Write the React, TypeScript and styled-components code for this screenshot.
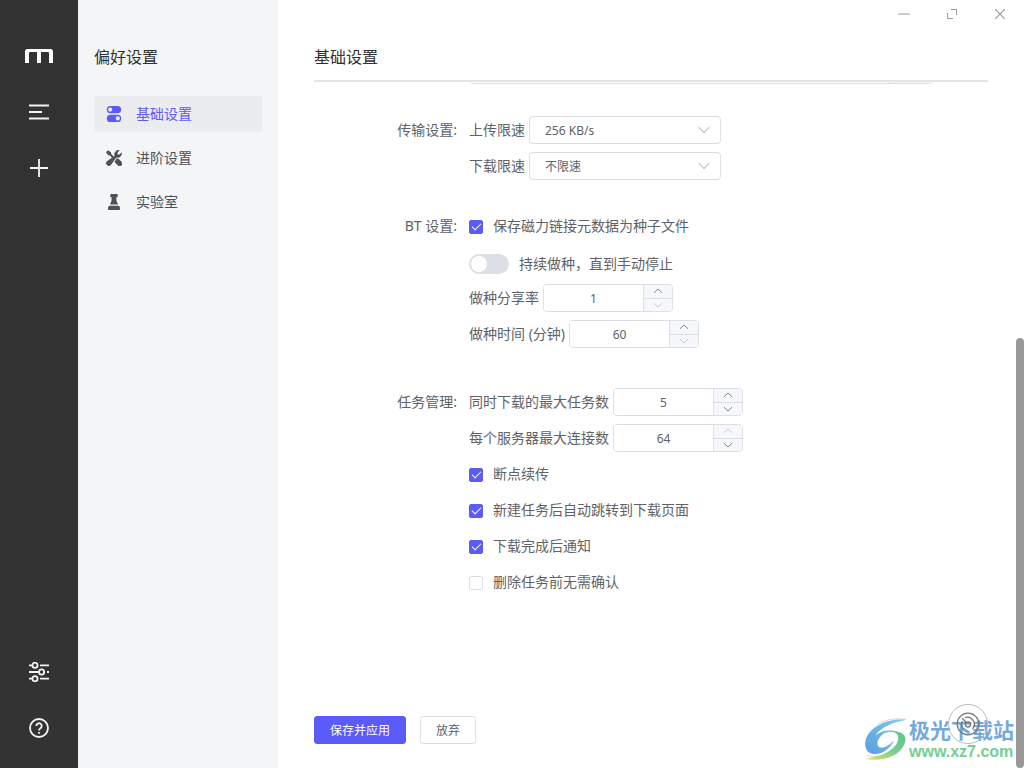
import React from 'react';
import styled, { createGlobalStyle, css } from 'styled-components';

const GlobalStyle = createGlobalStyle`
  *, *::before, *::after { box-sizing: border-box; }
  body {
    margin: 0;
    overflow: hidden;
    color: #606266;
    font: 14px/20px "Noto Sans", "Noto Sans CJK SC", sans-serif;
  }
  button, input, select { font-family: inherit; color: inherit; margin: 0; }
`;

const Shell = styled.div`
  display: flex;
  height: 100vh;
  background: #fff;
`;

const Rail = styled.aside`
  display: flex;
  flex-direction: column;
  justify-content: space-between;
  align-items: center;
  flex: 0 0 78px;
  padding: 40px 0 24px;
  background: #333;
`;

const RailGroup = styled.nav`
  display: flex;
  flex-direction: column;
  gap: 24px;
`;

const RailButton = styled.button`
  display: grid;
  place-items: center;
  width: 32px;
  height: 32px;
  padding: 0;
  border: 0;
  background: none;
  color: #f4f4f4;
`;

const SubNav = styled.nav`
  flex: 0 0 200px;
  padding: 45px 16px 0;
  background: #f4f5f7;
`;

const SubTitle = styled.h2`
  margin: 0 0 27px;
  color: #303133;
  font-size: 16px;
  line-height: 24px;
  font-weight: 400;
`;

const SubList = styled.ul`
  display: flex;
  flex-direction: column;
  gap: 8px;
  margin: 0;
  padding: 0;
  list-style: none;
`;

const SubLink = styled.a<{ $active?: boolean }>`
  display: flex;
  align-items: center;
  gap: 14px;
  height: 36px;
  padding: 0 12px;
  border-radius: 3px;
  color: ${p => (p.$active ? '#5b5bfa' : '#4d515a')};
  background: ${p => (p.$active ? '#eaecf0' : 'transparent')};
  text-decoration: none;
`;

const Main = styled.main`
  position: relative;
  display: flex;
  flex-direction: column;
  flex: 1;
  min-width: 0;
`;

const TitleBar = styled.div`
  display: flex;
  justify-content: flex-end;
  gap: 32px;
  flex: none;
  height: 28px;
  padding: 0 16px;
`;

const WindowButton = styled.button`
  display: grid;
  place-items: center;
  width: 16px;
  padding: 0;
  border: 0;
  background: none;
  color: #999;
`;

const Header = styled.header`
  flex: none;
  margin: 0 36px;
  padding: 17px 0 11px;
  border-bottom: 2px solid #e4e4e4;
`;

const Title = styled.h1`
  margin: 0;
  color: #303133;
  font-size: 16px;
  line-height: 24px;
  font-weight: 400;
`;

const Form = styled.form`
  display: flex;
  flex-direction: column;
  flex: 1;
  min-height: 0;
`;

const Scroll = styled.div`
  display: flex;
  flex-direction: column;
  gap: 24px;
  flex: 1;
  min-height: 0;
  margin: 0 36px;
  overflow: hidden;
`;

const Group = styled.section<{ $spaced?: boolean }>`
  display: flex;
  flex: none;
  padding-bottom: ${p => (p.$spaced ? 8 : 0)}px;
`;

const PathGroup = styled(Group)`
  margin: -26px 0 4px;
`;

const GroupLabel = styled.h3`
  flex: 0 0 155px;
  margin: 0;
  padding-right: 12px;
  font-size: 14px;
  line-height: 36px;
  font-weight: 400;
  text-align: right;
`;

const Fields = styled.div`
  flex: 1;
`;

const Row = styled.div<{ $low?: boolean }>`
  display: flex;
  align-items: center;
  gap: 4px;
  height: 36px;
  padding-top: ${p => (p.$low ? 4 : 0)}px;
`;

const PathBox = styled.div`
  display: flex;
  flex: 1;
  height: 28px;
  margin-right: 55px;
  border: 1px solid #dcdfe6;
  border-radius: 4px;
  overflow: hidden;
`;

const PathInput = styled.input`
  flex: 1;
  min-width: 0;
  border: 0;
  padding: 0 15px;
  font-size: 12px;
`;

const PathButton = styled.button`
  width: 44px;
  border: 0;
  border-left: 1px solid #dcdfe6;
  background: #f5f7fa;
`;

const SelectBox = styled.div`
  display: grid;
  align-items: center;
  width: 192px;
  height: 28px;

  > * { grid-area: 1 / 1; }
  > svg { justify-self: end; margin-right: 11px; pointer-events: none; }
`;

const Select = styled.select`
  appearance: none;
  width: 100%;
  height: 28px;
  padding: 0 30px 0 15px;
  border: 1px solid #dcdfe6;
  border-radius: 4px;
  background: #fff;
  font-size: 12px;
`;

const Stepper = styled.div`
  display: flex;
  width: 130px;
  height: 28px;
  border: 1px solid #dcdfe6;
  border-radius: 4px;
  overflow: hidden;
`;

const NumberInput = styled.input`
  appearance: textfield;
  flex: 1;
  min-width: 0;
  padding: 0;
  border: 0;
  font-size: 12px;
  text-align: center;

  &::-webkit-inner-spin-button { appearance: none; margin: 0; }
`;

const StepButtons = styled.div`
  display: flex;
  flex-direction: column;
  width: 29px;
  border-left: 1px solid #dcdfe6;
`;

const StepButton = styled.button`
  display: grid;
  place-items: center;
  flex: 1;
  padding: 0;
  border: 0;
  background: #f5f7fa;
  color: #85888e;

  &:disabled { color: #c6c9d0; }
  & + & { border-top: 1px solid #dcdfe6; }
`;

const CheckLabel = styled.label`
  display: flex;
  align-items: center;
  gap: 10px;
`;

const Checkbox = styled.input`
  appearance: none;
  display: grid;
  justify-items: center;
  width: 14px;
  height: 14px;
  margin-top: 1px;
  border: 1px solid #dcdfe6;
  border-radius: 2px;
  background: #fff;

  &:checked {
    border-color: #5b5bfa;
    background: #5b5bfa;
  }
  &:checked::after {
    content: "";
    width: 5px;
    height: 9px;
    border: solid #fff;
    border-width: 0 1px 1px 0;
    transform: rotate(45deg);
  }
`;

const Switch = styled.input`
  appearance: none;
  width: 40px;
  height: 20px;
  padding: 2px;
  border-radius: 10px;
  background: #dcdfe6;

  &::before {
    content: "";
    display: block;
    width: 16px;
    height: 16px;
    border-radius: 50%;
    background: #fff;
  }
  &:checked { background: #5b5bfa; }
  &:checked::before { margin-left: auto; }
`;

const Actions = styled.footer`
  display: flex;
  gap: 14px;
  flex: none;
  padding: 24px 36px;
`;

const Button = styled.button<{ $primary?: boolean }>`
  height: 28px;
  padding: 2px 15px 0;
  border: 1px solid #dcdfe6;
  border-radius: 3px;
  background: #fff;
  font-size: 12px;
  line-height: 16px;
  ${p => p.$primary && css`
    border-color: #5b5bfa;
    background: #5b5bfa;
    color: #fff;
  `}
`;

const Thumb = styled.div`
  position: absolute;
  right: 0;
  bottom: 0;
  width: 8px;
  height: 56%;
  border-radius: 4px;
  background: #999;
`;

const SpeedButton = styled.button`
  position: absolute;
  right: 36px;
  bottom: 24px;
  display: grid;
  place-items: center;
  width: 40px;
  height: 40px;
  padding: 0;
  border: 1px solid #bbb;
  border-radius: 50%;
  background: transparent;
  color: #777;
`;

const Watermark = styled.a`
  position: absolute;
  right: 10px;
  bottom: 6px;
  display: flex;
  align-items: center;
  text-decoration: none;
`;

const MarkText = styled.span`
  display: flex;
  flex-direction: column;
  font-weight: 700;
`;

const MarkName = styled.span`
  color: #73a9dc;
  font-size: 21px;
  line-height: 24px;
`;

const MarkUrl = styled.span`
  color: #74cf93;
  font-family: "Liberation Sans", sans-serif;
  font-size: 16px;
  line-height: 20px;
`;

const Chevron = ({ up }: { up?: boolean }) => (
  <svg width="12" height="12" viewBox="0 0 12 12" fill="none" stroke="currentColor" strokeWidth="1">
    <path d={up ? 'M2 7.800l4-3.800 4 3.800' : 'M2 4.200l4 3.800 4-3.800'} />
  </svg>
);

function Choice({ id, label, value, options }: { id: string; label: string; value: string; options: string[] }) {
  return (
    <Row>
      <label htmlFor={id}>{label}</label>
      <SelectBox>
        <Select id={id} defaultValue={value}>
          {options.map(o => <option key={o}>{o}</option>)}
        </Select>
        <svg width="12" height="12" viewBox="0 0 12 12" fill="none" stroke="#c0c4cc" strokeWidth="1.2">
          <path d="M.8 3.2L6 8.600l5.200-5.400" />
        </svg>
      </SelectBox>
    </Row>
  );
}

function NumberField({ id, label, initial, min, max }: { id: string; label: string; initial: number; min: number; max: number }) {
  const [value, setValue] = React.useState(initial);
  return (
    <Row>
      <label htmlFor={id}>{label}</label>
      <Stepper>
        <NumberInput id={id} type="number" min={min} max={max} value={value} onChange={e => setValue(Number(e.target.value))} />
        <StepButtons>
          <StepButton type="button" aria-label="增加" disabled={value >= max} onClick={() => setValue(value + 1)}><Chevron up /></StepButton>
          <StepButton type="button" aria-label="减少" disabled={value <= min} onClick={() => setValue(value - 1)}><Chevron /></StepButton>
        </StepButtons>
      </Stepper>
    </Row>
  );
}

function Check({ label, checked }: { label: string; checked?: boolean }) {
  return (
    <Row>
      <CheckLabel>
        <Checkbox type="checkbox" defaultChecked={checked} />
        {label}
      </CheckLabel>
    </Row>
  );
}

const TogglesIcon = () => (
  <svg width="16" height="16" viewBox="0 0 16 16" fill="currentColor" fillRule="evenodd">
    <path d="M4.400 0h7.200a3.600 3.600 0 0 1 0 7.200H4.400a3.600 3.600 0 0 1 0-7.200zM4.200 1.500a2.100 2.100 0 1 0 0 4.200 2.100 2.100 0 0 0 0-4.200z" />
    <path d="M4.400 8.800h7.200a3.600 3.600 0 0 1 0 7.200H4.400a3.600 3.600 0 0 1 0-7.200zm7.400 1.500a2.100 2.100 0 1 0 0 4.200 2.100 2.100 0 0 0 0-4.200z" />
  </svg>
);

const ToolsIcon = () => (
  <svg width="16" height="16" viewBox="0 0 16 16" fill="currentColor">
    <path d="M13.800.3L11.600 2.500v1.900h1.900l2.200-2.200a4.300 4.300 0 0 1-5.400 5.300L4.900 15a2.500 2.500 0 0 1-3.900 0 2.500 2.500 0 0 1 0-3.700L8.500 5.700A4.300 4.300 0 0 1 13.800.3z" />
    <path d="M2 .2l2.900 2 .3 1.800 2.500 2.500-1.400 1.400L3.800 5.400 2 5.100 0 2.200z" />
    <path d="M10.500 8.500l2 .3 3 3a2.500 2.500 0 0 1-3.600 3.600L8.500 12z" />
  </svg>
);

const LabIcon = () => (
  <svg width="16" height="16" viewBox="0 0 16 16" fill="currentColor">
    <path d="M5 0h6a.7.7 0 0 1 .7.7v1.800a.7.7 0 0 1-.7.7h-.6v3.200l1.600 4H4l1.600-4V3.200H5a.7.7 0 0 1-.7-.7V.7A.7.7 0 0 1 5 0z" />
    <path d="M4 11.800h8a2 2 0 0 1 2 2V15a1 1 0 0 1-1 1H3a1 1 0 0 1-1-1v-1.200a2 2 0 0 1 2-2z" />
  </svg>
);

const SwirlLogo = () => (
  <svg width="46" height="44" viewBox="0 0 46 44">
    <defs>
      <linearGradient id="blueArc" x1="0" y1="1" x2="1" y2="0">
        <stop offset="0" stopColor="#5b9fe0" />
        <stop offset="1" stopColor="#7ccbee" />
      </linearGradient>
      <linearGradient id="greenArc" x1="0" y1="1" x2="1" y2="0">
        <stop offset="0" stopColor="#e5e65a" />
        <stop offset=".5" stopColor="#77cd91" />
        <stop offset="1" stopColor="#62c48b" />
      </linearGradient>
    </defs>
    <path fill="url(#blueArc)" d="M43 2C30 0 14 5 6 15-1 25 2 36 12 36c8 0 16-6 19-14-5 6-11 9-15 7-4-3 0-13 9-15h10C27 11 17 13 12 18 18 9 30 4 43 2z" />
    <path fill="url(#greenArc)" d="M27 14C38 13 37 24 30 30 22 37 12 39 2 41 20 44 36 38 41 27 46 17 38 12 27 14z" />
    <path fill="none" stroke="#e7ab90" strokeWidth=".6" d="M15 6C24 1 33 0 43 1.500M4 37c3 2 7 2 11 1" />
  </svg>
);

export default function App() {
  return (
    <>
      <GlobalStyle />
      <Shell lang="zh-CN">
        <Rail>
          <RailGroup>
            <RailButton aria-label="Motrix">
              <svg width="28" height="14" viewBox="0 0 28 14">
                <path fill="#fff" d="M0 14V2.500Q0 0 2.500 0H25.500Q28 0 28 2.500V14H24V4Q24 3 23 3H16V14H12V3H5Q4 3 4 4V14z" />
              </svg>
            </RailButton>
            <RailButton aria-label="任务列表">
              <svg width="20" height="16" viewBox="0 0 20 16" fill="none" stroke="currentColor" strokeWidth="1.800">
                <path d="M0 1.500H20M0 8H13M0 14.500H20" />
              </svg>
            </RailButton>
            <RailButton aria-label="新建任务">
              <svg width="18" height="18" viewBox="0 0 18 18" fill="none" stroke="currentColor" strokeWidth="1.800">
                <path d="M9 0V18M0 9H18" />
              </svg>
            </RailButton>
          </RailGroup>
          <RailGroup>
            <RailButton aria-label="偏好设置">
              <svg width="20" height="20" viewBox="0 0 20 20" fill="none" stroke="currentColor" strokeWidth="1.800">
                <path d="M0 3.300H3M11 3.300H20M0 10H9.500M18 10H20M0 16.700H3M11 16.700H20" />
                <circle cx="6" cy="3.300" r="2.600" />
                <circle cx="12.600" cy="10" r="2.600" />
                <circle cx="6" cy="16.700" r="2.600" />
              </svg>
            </RailButton>
            <RailButton aria-label="帮助">
              <svg width="20" height="20" viewBox="0 0 20 20" fill="none" stroke="currentColor" strokeWidth="1.800">
                <circle cx="10" cy="10" r="9" />
                <path d="M7.300 8a2.700 2.700 0 1 1 4.200 2.200C10.400 10.900 10 11.200 10 12.600M10 14v1.800" />
              </svg>
            </RailButton>
          </RailGroup>
        </Rail>

        <SubNav>
          <SubTitle>偏好设置</SubTitle>
          <SubList>
            <li><SubLink href="#basic" $active><TogglesIcon />基础设置</SubLink></li>
            <li><SubLink href="#advanced"><ToolsIcon />进阶设置</SubLink></li>
            <li><SubLink href="#lab"><LabIcon />实验室</SubLink></li>
          </SubList>
        </SubNav>

        <Main>
          <TitleBar>
            <WindowButton aria-label="最小化">
              <svg width="12" height="12" viewBox="0 0 12 12" stroke="#ccc" strokeWidth="2"><path d="M0 6H12" /></svg>
            </WindowButton>
            <WindowButton aria-label="最大化">
              <svg width="10" height="10" viewBox="0 0 10 10" fill="none" stroke="currentColor"><path d="M4 .5H9.500V6M.5 4V9.500H6" /></svg>
            </WindowButton>
            <WindowButton aria-label="关闭">
              <svg width="10" height="10" viewBox="0 0 10 10" stroke="currentColor" strokeWidth="1.200"><path d="M0 0L10 10M10 0L0 10" /></svg>
            </WindowButton>
          </TitleBar>
          <Header><Title>基础设置</Title></Header>
          <Form onSubmit={e => e.preventDefault()}>
            <Scroll>
              <PathGroup>
                <GroupLabel />
                <PathBox>
                  <PathInput aria-label="下载路径" readOnly />
                  <PathButton type="button" aria-label="选择文件夹" />
                </PathBox>
              </PathGroup>
              <Group>
                <GroupLabel>传输设置:</GroupLabel>
                <Fields>
                  <Choice id="upload" label="上传限速" value="256 KB/s" options={['不限速', '256 KB/s']} />
                  <Choice id="download" label="下载限速" value="不限速" options={['不限速', '256 KB/s']} />
                </Fields>
              </Group>
              <Group $spaced>
                <GroupLabel>BT 设置:</GroupLabel>
                <Fields>
                  <Check label="保存磁力链接元数据为种子文件" checked />
                  <Row $low>
                    <CheckLabel><Switch type="checkbox" role="switch" />持续做种，直到手动停止</CheckLabel>
                  </Row>
                  <NumberField id="ratio" label="做种分享率" initial={1} min={1} max={100} />
                  <NumberField id="time" label="做种时间 (分钟)" initial={60} min={60} max={525600} />
                </Fields>
              </Group>
              <Group>
                <GroupLabel>任务管理:</GroupLabel>
                <Fields>
                  <NumberField id="tasks" label="同时下载的最大任务数" initial={5} min={1} max={10} />
                  <NumberField id="connections" label="每个服务器最大连接数" initial={64} min={1} max={64} />
                  <Check label="断点续传" checked />
                  <Check label="新建任务后自动跳转到下载页面" checked />
                  <Check label="下载完成后通知" checked />
                  <Check label="删除任务前无需确认" />
                </Fields>
              </Group>
            </Scroll>
            <Actions>
              <Button type="submit" $primary>保存并应用</Button>
              <Button type="button">放弃</Button>
            </Actions>
          </Form>
          <Watermark href="#source">
            <SwirlLogo />
            <MarkText>
              <MarkName>极光下载站</MarkName>
              <MarkUrl>www.xz7.com</MarkUrl>
            </MarkText>
          </Watermark>
          <SpeedButton aria-label="速度">
            <svg width="24" height="24" viewBox="0 0 24 24" fill="none" stroke="currentColor" strokeWidth="1.300">
              <circle cx="12" cy="12" r="10.800" />
              <path d="M7.500 17a7 7 0 0 1-1.200-8M9 5.700a7 7 0 0 1 7.500 11.300" />
              <circle cx="12" cy="12.500" r="2.500" />
              <path d="M6.300 6.300l4 4.400" />
            </svg>
          </SpeedButton>
          <Thumb />
        </Main>
      </Shell>
    </>
  );
}
